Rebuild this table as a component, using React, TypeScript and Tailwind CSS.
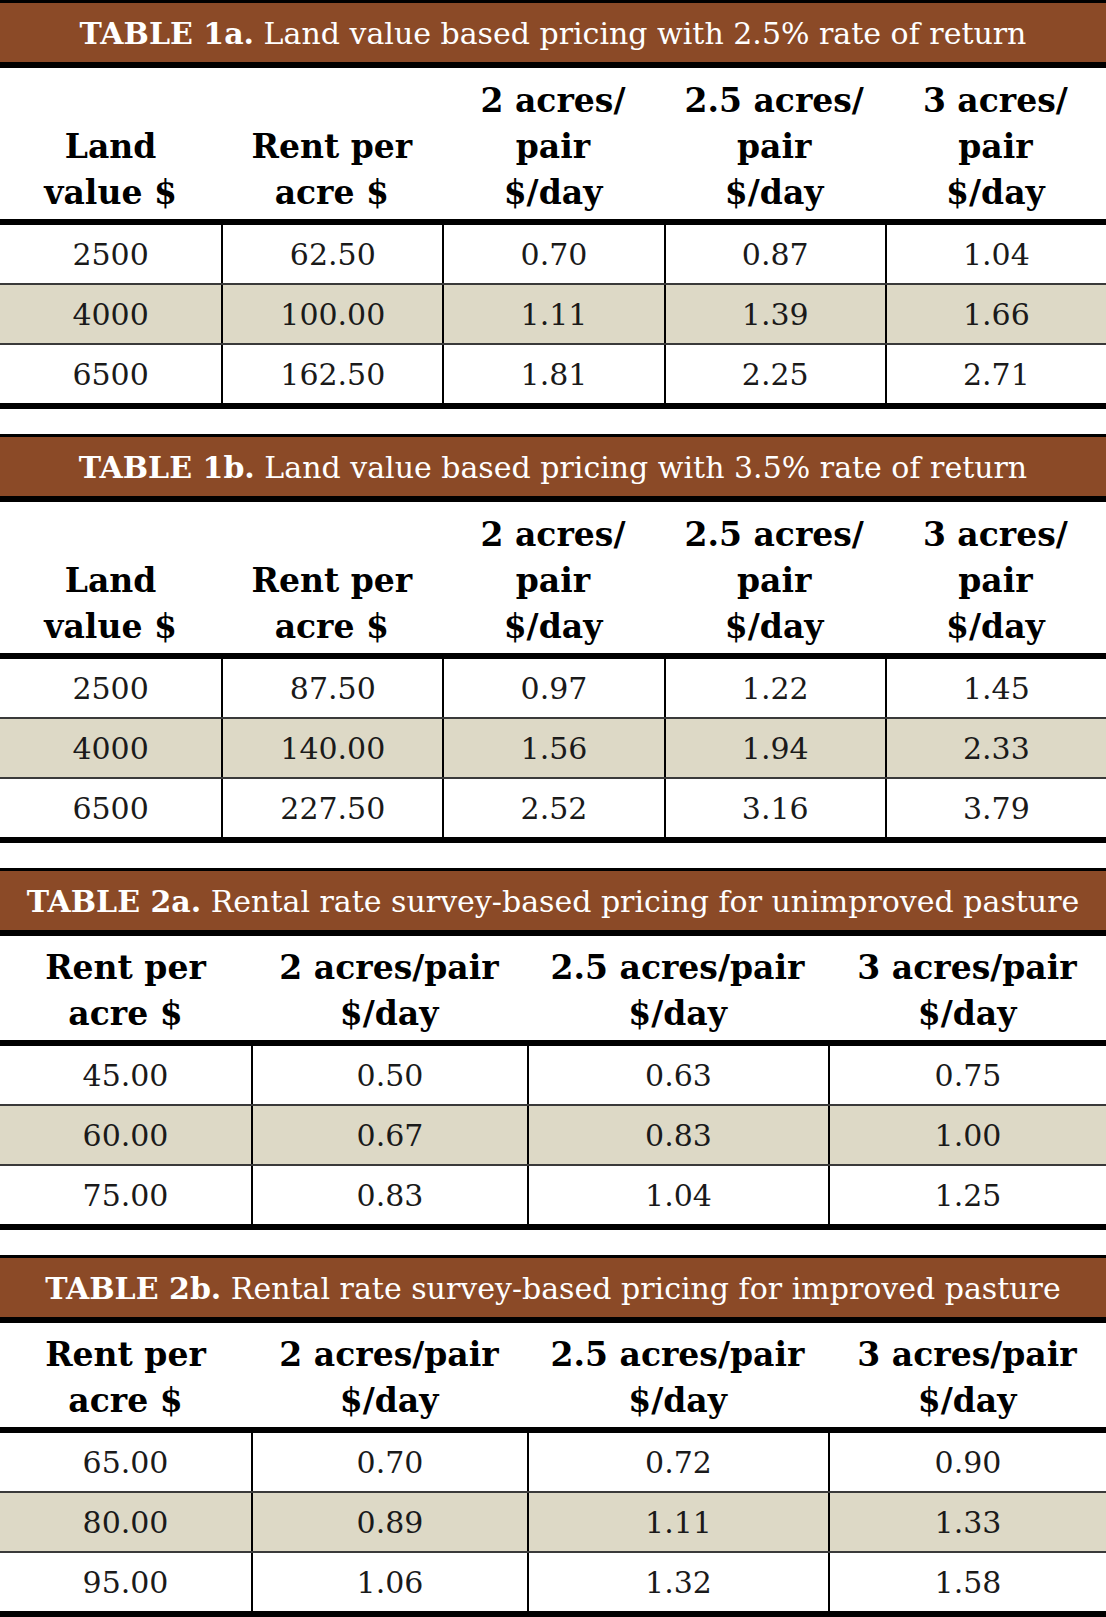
import React from 'react';

type TableSpec = {
  label: string;
  title: string;
  headers: string[][];
  rows: string[][];
  cols: string;
  headerHeight: string;
};

const serif = "font-['DejaVu_Serif',serif]";

const tables: TableSpec[] = [
  {
    label: 'TABLE 1a.',
    title: 'Land value based pricing with 2.5% rate of return',
    headers: [
      ['Land', 'value $'],
      ['Rent per', 'acre $'],
      ['2 acres/', 'pair', '$/day'],
      ['2.5 acres/', 'pair', '$/day'],
      ['3 acres/', 'pair', '$/day'],
    ],
    rows: [
      ['2500', '62.50', '0.70', '0.87', '1.04'],
      ['4000', '100.00', '1.11', '1.39', '1.66'],
      ['6500', '162.50', '1.81', '2.25', '2.71'],
    ],
    cols: 'grid-cols-5',
    headerHeight: 'h-[157px]',
  },
  {
    label: 'TABLE 1b.',
    title: 'Land value based pricing with 3.5% rate of return',
    headers: [
      ['Land', 'value $'],
      ['Rent per', 'acre $'],
      ['2 acres/', 'pair', '$/day'],
      ['2.5 acres/', 'pair', '$/day'],
      ['3 acres/', 'pair', '$/day'],
    ],
    rows: [
      ['2500', '87.50', '0.97', '1.22', '1.45'],
      ['4000', '140.00', '1.56', '1.94', '2.33'],
      ['6500', '227.50', '2.52', '3.16', '3.79'],
    ],
    cols: 'grid-cols-5',
    headerHeight: 'h-[157px]',
  },
  {
    label: 'TABLE 2a.',
    title: 'Rental rate survey-based pricing for unimproved pasture',
    headers: [
      ['Rent per', 'acre $'],
      ['2 acres/pair', '$/day'],
      ['2.5 acres/pair', '$/day'],
      ['3 acres/pair', '$/day'],
    ],
    rows: [
      ['45.00', '0.50', '0.63', '0.75'],
      ['60.00', '0.67', '0.83', '1.00'],
      ['75.00', '0.83', '1.04', '1.25'],
    ],
    cols: 'grid-cols-[251px_276px_301px_1fr]',
    headerHeight: 'h-[110px]',
  },
  {
    label: 'TABLE 2b.',
    title: 'Rental rate survey-based pricing for improved pasture',
    headers: [
      ['Rent per', 'acre $'],
      ['2 acres/pair', '$/day'],
      ['2.5 acres/pair', '$/day'],
      ['3 acres/pair', '$/day'],
    ],
    rows: [
      ['65.00', '0.70', '0.72', '0.90'],
      ['80.00', '0.89', '1.11', '1.33'],
      ['95.00', '1.06', '1.32', '1.58'],
    ],
    cols: 'grid-cols-[251px_276px_301px_1fr]',
    headerHeight: 'h-[110px]',
  },
];

function PricingTable({ t }: { t: TableSpec }) {
  return (
    <section className="w-full">
      <div className="flex h-[68px] items-center justify-center border-t-[3px] border-b-[6px] border-black bg-[#8b4a27] pt-[2px] text-[30px] whitespace-nowrap text-white">
        <span className={serif}>
          <span className="font-bold">{t.label}</span> {t.title}
        </span>
      </div>

      <div className={`grid ${t.cols} ${t.headerHeight} border-b-[6px] border-black`}>
        {t.headers.map((lines, i) => (
          <div
            key={i}
            className={`${serif} flex flex-col items-center justify-end pb-[3px] text-[33px] leading-[46px] font-bold text-black`}
          >
            {lines.map((l) => (
              <span key={l}>{l}</span>
            ))}
          </div>
        ))}
      </div>

      <div className="border-b-[6px] border-black">
        {t.rows.map((row, r) => (
          <div
            key={r}
            className={`grid ${t.cols} ${r === 1 ? 'bg-[#ddd9c6]' : 'bg-white'} ${
              r < 2 ? 'h-[60px] border-b-2 border-[#3a3a3a]' : 'h-[58px]'
            }`}
          >
            {row.map((v, c) => (
              <div
                key={c}
                className={`${serif} flex items-center justify-center text-[30px] text-[#1a1a1a] ${
                  c > 0 ? 'border-l-2 border-black' : ''
                }`}
              >
                {v}
              </div>
            ))}
          </div>
        ))}
      </div>
    </section>
  );
}

export default function App() {
  return (
    <div className="flex w-[1106px] flex-col gap-[25px] bg-white">
      {tables.map((t) => (
        <PricingTable key={t.label} t={t} />
      ))}
    </div>
  );
}
